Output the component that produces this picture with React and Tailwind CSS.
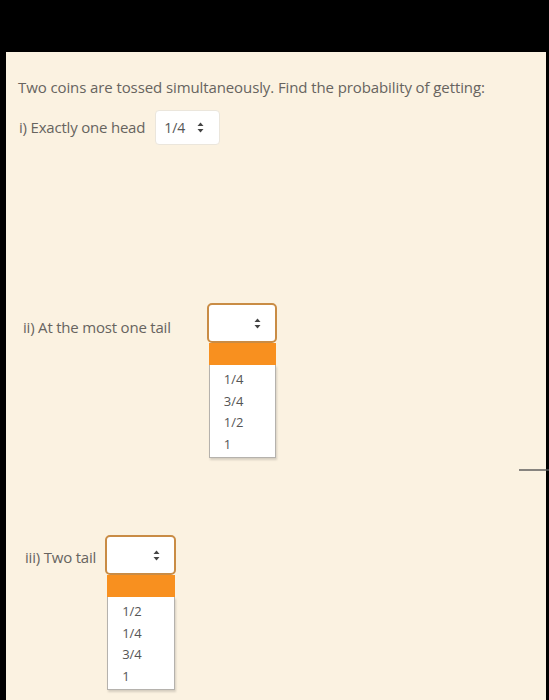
import React from 'react';

const font = { fontFamily: '"Open Sans", "Noto Sans", sans-serif' };

const Arrows = () => (
    <svg width="7" height="11" viewBox="0 0 7 11" className="text-[#444]">
        <path d="M3.5 0.5 L6.5 4 L0.5 4 Z" fill="currentColor" />
        <path d="M3.5 10.5 L6.5 7 L0.5 7 Z" fill="currentColor" />
    </svg>
);

const OpenSelect = ({ options, width }) => (
    <div className="relative" style={{ width }}>
        <div className="h-[40px] w-full bg-white border-2 border-[#c98c45] rounded-[5px] flex items-center justify-end pr-[14px]">
            <Arrows />
        </div>
        <div className="absolute left-[2px] right-[1px] top-full">
            <div className="h-[22px] bg-[#f8901f]" />
            <div className="bg-white border border-[#b5b2ad] border-t-0 shadow-[1px_2px_2px_rgba(0,0,0,0.15)] pl-[14px] pt-[4px] pb-[2px] text-[13px] text-[#555]">
                {options.map((o) => (
                    <div key={o} className="h-[21.5px] leading-[21.5px]">{o}</div>
                ))}
            </div>
        </div>
    </div>
);

export default function App() {
    return (
        <div className="bg-black h-[700px] pt-[52px] pl-[6px] pr-[3px] relative overflow-hidden" style={font}>
            <div className="bg-[#fbf2e1] h-[648px] text-[#67645f] relative">
                <p className="pl-[12px] pt-[25px] text-[15px] leading-[20px] tracking-[-0.1px]">
                    Two coins are tossed simultaneously. Find the probability of getting:
                </p>

                <div className="flex items-center ml-[13px] mt-[13px]">
                    <span className="text-[15px] tracking-[-0.2px]">i) Exactly one head</span>
                    <div className="ml-[10px] h-[35px] w-[65px] bg-white border border-[#ebe6dc] rounded-[4px] flex items-center pl-[8px] gap-[12px]">
                        <span className="text-[14px] text-[#555]">1/4</span>
                        <Arrows />
                    </div>
                </div>

                <div className="flex items-start ml-[17px] mt-[158px]">
                    <span className="text-[15px] tracking-[-0.2px] mt-[13px]">ii) At the most one tail</span>
                    <div className="ml-[36px]">
                        <OpenSelect options={['1/4', '3/4', '1/2', '1']} width={70} />
                    </div>
                </div>

                <div className="flex items-start ml-[19px] mt-[192px]">
                    <span className="text-[15px] tracking-[-0.2px] mt-[11px]">iii) Two tail</span>
                    <div className="ml-[9px]">
                        <OpenSelect options={['1/2', '1/4', '3/4', '1']} width={71} />
                    </div>
                </div>

                <div className="absolute right-[-3px] top-[417px] w-[30px] h-[2px] bg-[#555] opacity-70" />
            </div>
        </div>
    );
}
